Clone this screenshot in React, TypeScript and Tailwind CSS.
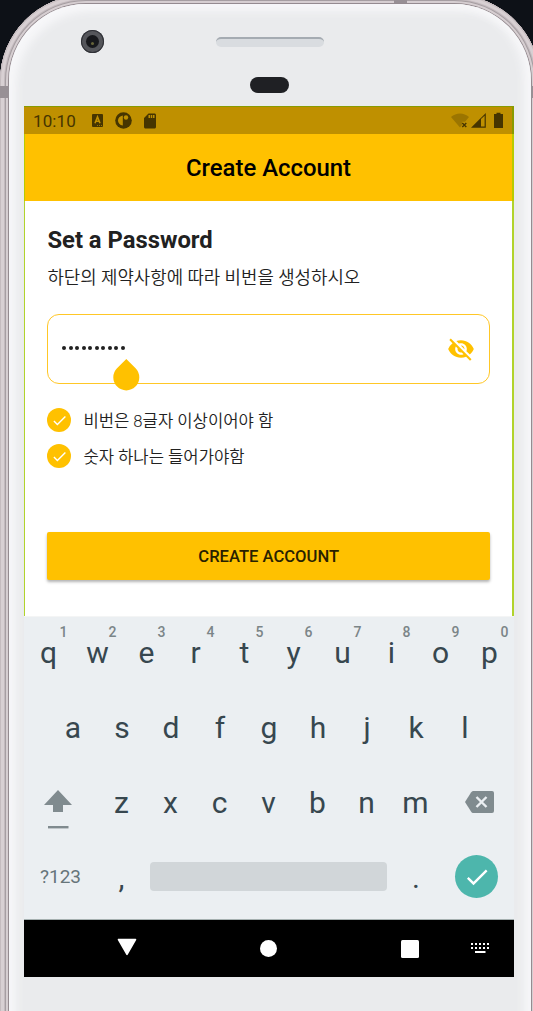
import React from "react";
import { MdVisibilityOff, MdCheck, MdSdCard } from "react-icons/md";

const topRow = ["q", "w", "e", "r", "t", "y", "u", "i", "o", "p"];
const middleRow = ["a", "s", "d", "f", "g", "h", "j", "k", "l"];
const bottomRow = ["z", "x", "c", "v", "b", "n", "m"];

function Key({ label, hint }: { label: string; hint?: string }) {
  return (
    <div className="relative flex h-[75px] w-[49px] shrink-0 items-center justify-center pt-[2px]">
      <span>{label}</span>
      {hint && (
        <span className="absolute top-[10px] left-[35.5px] text-[14px] leading-[16px] font-medium text-[#7b8588]">
          {hint}
        </span>
      )}
    </div>
  );
}

function StatusBar() {
  return (
    <div className="flex h-7 shrink-0 items-center border-t border-r-2 border-t-[#8a9b00] border-r-[#8a9b00] bg-[#bf9000] pr-[7px] pl-[9px] text-[#463500]">
      <span className="text-[17px] leading-7 tracking-[0.1px]">10:10</span>
      <svg className="ml-[16px]" width="11" height="13" viewBox="0 0 11 13">
        <rect width="11" height="13" rx="1" fill="currentColor" />
        <path d="M3 9.2L5.5 3L8 9.2M4 7.2H7" fill="none" stroke="#bf9000" strokeWidth="1.6" />
        <path d="M5 11.5H10" stroke="#bf9000" strokeWidth=".7" strokeDasharray="1 1" />
      </svg>
      <svg className="ml-3" width="17" height="17" viewBox="0 0 17 17">
        <circle cx="8.5" cy="8.5" r="8.3" fill="currentColor" />
        <path d="M7.8 3.4V13.6C4.8 13 3 11 3 8.4S4.8 3.9 7.8 3.4Z" fill="#bf9000" />
        <circle cx="11" cy="5.5" r="2.2" fill="#bf9000" />
      </svg>
      <MdSdCard className="ml-[9px]" size={18} />
      <svg className="ml-auto" width="54" height="18" viewBox="0 0 54 18">
        <path d="M0 5C5 .3 13 .3 18 5L14 9.8H11V13L9 15.5Z" fill="#9b7500" />
        <path d="M11.3 11L15.3 15M15.3 11L11.3 15" stroke="currentColor" strokeWidth="1.4" />
        <path d="M20 15.8L34.8 1V15.8Z" fill="currentColor" />
        <path d="M30 7L33.6 3.8V14.6H30Z" fill="#bf9000" />
        <path d="M43 2H45.5V.8H49.5V2H52V16H43Z" fill="currentColor" />
      </svg>
    </div>
  );
}

function Requirement({ children }: { children: React.ReactNode }) {
  return (
    <div className="flex h-6 items-center gap-3">
      <span className="flex size-6 items-center justify-center rounded-full bg-[#ffc100]">
        <MdCheck size={17} color="white" />
      </span>
      <span className="pt-[3px] text-[16.65px] leading-6 font-[350] whitespace-nowrap">{children}</span>
    </div>
  );
}

function Content() {
  return (
    <main className="flex h-[415px] shrink-0 flex-col border-r-2 border-l border-[#b1d32c] bg-white pr-[22px] pl-[22.4px] text-[#212121]">
      <h1 className="mt-[25px] text-[23.8px] leading-7 font-bold whitespace-nowrap">Set a Password</h1>
      <p className="mt-3 text-[17.85px] leading-6 font-[350] whitespace-nowrap">하단의 제약사항에 따라 비번을 생성하시오</p>
      <div className="relative mt-6 flex h-[70px] shrink-0 items-center justify-between rounded-[12px] border border-[#ffc726] pr-[14px] pl-[14px]">
        <div className="flex gap-[2.5px] pb-[2px]">
          {Array.from({ length: 10 }, (_, i) => (
            <span key={i} className="size-1 rounded-full bg-[#212121]" />
          ))}
        </div>
        <MdVisibilityOff size={28} color="#ffc100" />
        <svg className="absolute top-[44px] left-[64.4px]" width="27" height="32" viewBox="0 0 27 32">
          <path d="M13.3 0L22.6 9.3A13 13 0 1 1 4 9.3Z" fill="#ffc100" />
        </svg>
      </div>
      <div className="mt-6 flex flex-col gap-3">
        <Requirement>비번은 8글자 이상이어야 함</Requirement>
        <Requirement>숫자 하나는 들어가야함</Requirement>
      </div>
      <button className="mt-16 h-12 shrink-0 rounded-[2px] bg-[#ffc100] pt-[2px] text-[16.6px] font-medium text-[#292100] shadow-[0_2px_3px_rgba(0,0,0,0.3)]">
        CREATE ACCOUNT
      </button>
    </main>
  );
}

function Keyboard() {
  return (
    <section className="flex h-[304px] shrink-0 flex-col border-t border-b border-t-[#f4f5f5] border-b-[#a5b0b0] bg-[#ebeff2] text-[30px] text-[#37474f]">
      <div className="-mt-[3px] flex h-[75px] shrink-0">
        {topRow.map((k, i) => (
          <Key key={k} label={k} hint={String((i + 1) % 10)} />
        ))}
      </div>
      <div className="flex h-[75px] shrink-0 justify-center">
        {middleRow.map((k) => (
          <Key key={k} label={k} />
        ))}
      </div>
      <div className="flex h-[75px] shrink-0 items-center">
        <svg className="mt-[15px] ml-5 shrink-0" width="28" height="39" viewBox="0 0 28 39">
          <path d="M14 0L28 15H19V22H9V15H0Z" fill="#808b8f" />
          <path d="M4 36H24.5V38.4H4Z" fill="#808b8f" />
        </svg>
        <div className="ml-[25px] flex">
          {bottomRow.map((k) => (
            <Key key={k} label={k} />
          ))}
        </div>
        <svg className="ml-[25px] shrink-0" width="29" height="22" viewBox="0 0 29 22">
          <path d="M8 0H27Q29 0 29 2V20Q29 22 27 22H8Q7 22 6 20.5L0 11L6 1.5Q7 0 8 0Z" fill="#808b8f" />
          <path d="M11.5 6L21.5 16M21.5 6L11.5 16" stroke="#ebeff2" strokeWidth="2.4" />
        </svg>
      </div>
      <div className="flex h-[75px] shrink-0 items-center">
        <span className="w-[73px] pt-[2px] text-center text-[19px] text-[#66757a]">?123</span>
        <Key label="," />
        <div className="ml-[4px] h-[29px] w-[237px] rounded-[4px] bg-[#d1d6d9]" />
        <div className="ml-[4.5px]">
          <Key label="." />
        </div>
        <span className="ml-[14.5px] flex size-[43px] items-center justify-center rounded-full bg-[#4db6ac]">
          <MdCheck size={28} color="white" />
        </span>
      </div>
    </section>
  );
}

function NavigationBar() {
  return (
    <nav className="flex h-[57px] shrink-0 items-center bg-black">
      <svg className="mb-1 ml-[93px]" width="20" height="18" viewBox="0 0 20 18">
        <path d="M1.5 1.5H18.5L10 16.3Z" fill="white" stroke="white" strokeWidth="1.6" strokeLinejoin="round" />
      </svg>
      <span className="ml-[122.5px] size-[17.5px] rounded-full bg-white" />
      <span className="ml-[124px] size-[18px] rounded-[1.5px] bg-white" />
      <svg className="ml-[52px]" width="19" height="11" viewBox="0 0 19 11" fill="white">
        {[0, 4, 8, 12, 16].map((x) => (
          <g key={x}>
            <rect x={x} y="0" width="2" height="2" />
            <rect x={x} y="4" width="2" height="2" />
          </g>
        ))}
        <rect x="4" y="8" width="10.5" height="2" />
      </svg>
    </nav>
  );
}

export default function App() {
  return (
    <div className="flex h-[1011px] w-[533px] flex-col overflow-hidden bg-[#0d1117] font-[Roboto,'Noto_Sans_CJK_KR',sans-serif]">
      <div className="relative -mt-[5px] flex h-[1040px] w-[540px] shrink-0 flex-col overflow-hidden rounded-t-[86px] bg-[#958b90] pt-[9px] pr-[9px] pl-[9px] shadow-[inset_0_0_0_1px_#c5bcbf,inset_0_0_0_4px_#d8d0d3,inset_0_0_0_5px_#c3babe,inset_0_0_0_6px_#a69ea2,inset_0_0_0_8px_#d6ced1]">
        <span className="absolute top-[91px] left-0 h-3 w-[9px] bg-[#989095]" />
        <span className="absolute top-[5px] left-[394px] h-[3px] w-[13px] bg-[#989095]" />
        <span className="absolute top-[91px] right-0 h-3 w-[9px] bg-[#989095]" />
        <div className="relative flex h-[1031px] shrink-0 flex-col rounded-t-[77px] bg-[#eaebed] px-[15px] shadow-[inset_7px_7px_9px_#f7f7f9,inset_-7px_0_9px_#f7f7f9]">
          <header className="relative h-[102px] shrink-0">
            <span className="absolute top-[26px] left-[57px] flex size-[23px] items-center justify-center rounded-full bg-[#55565b] ring-1 ring-[#303137] ring-inset">
              <span className="flex size-[13px] items-center justify-center rounded-full bg-[#17181c]">
                <span className="mt-1 size-[3px] rounded-full bg-[#66643a]" />
              </span>
            </span>
            <span className="absolute top-[33px] left-[192px] h-[10px] w-[108px] rounded-full border-t-2 border-[#a5abb2] bg-[#d9dce0]" />
            <span className="absolute top-[73px] left-[226px] h-4 w-[39px] rounded-full bg-[#1f2024]" />
          </header>
          <div className="flex h-[871px] w-[490px] shrink-0 flex-col">
            <StatusBar />
            <div className="flex h-[67px] shrink-0 items-center justify-center border-r-2 border-l border-r-[#b9cb00] border-l-[#b9cb00] bg-[#ffc100] pt-[2px] text-[23.9px] font-medium text-black">
              Create Account
            </div>
            <Content />
            <Keyboard />
            <NavigationBar />
          </div>
        </div>
      </div>
    </div>
  );
}
